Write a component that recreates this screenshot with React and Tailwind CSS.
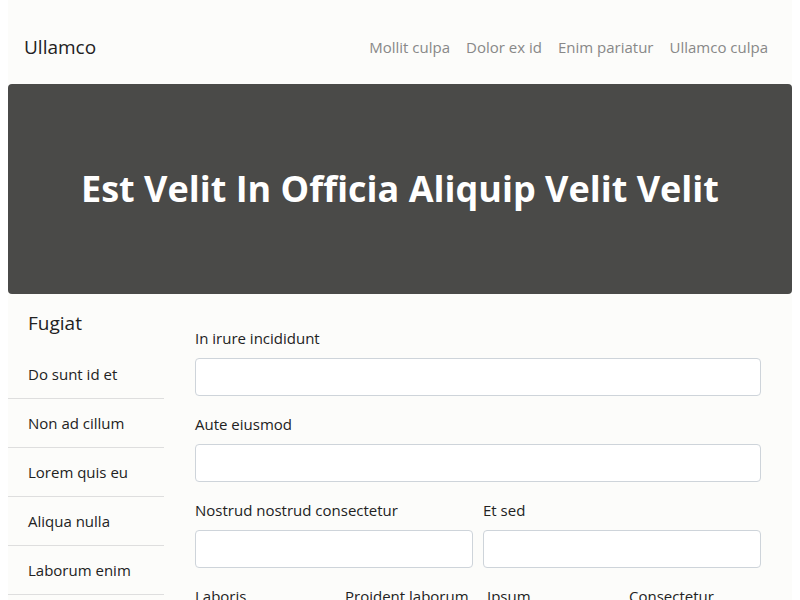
import React from 'react';

const links = ['Mollit culpa', 'Dolor ex id', 'Enim pariatur', 'Ullamco culpa'];
const sideItems = ['Do sunt id et', 'Non ad cillum', 'Lorem quis eu', 'Aliqua nulla', 'Laborum enim'];

function Field({ label, className = '' }) {
  return (
    <div className={className}>
      <label className="block text-[15px] text-[#222] leading-[20px] mb-[10px]">{label}</label>
      <input type="text" className="block w-full h-[38px] bg-white border border-[#ced4da] rounded-[4px]" />
    </div>
  );
}

export default function App() {
  return (
    <div className="min-h-screen bg-white px-2 font-['Open_Sans',sans-serif]">
      {/* Navbar */}
      <nav className="h-[84px] pt-[10px] bg-[#fcfcfa] flex items-center justify-between pl-4 pr-6">
        <span className="text-[19px] text-[#222]">Ullamco</span>
        <ul className="flex gap-4 text-[15px] text-[#888]">
          {links.map((l) => (
            <li key={l}>{l}</li>
          ))}
        </ul>
      </nav>

      {/* Hero */}
      <header className="h-[210px] bg-[#4a4a48] rounded-[4px] flex items-center justify-center">
        <h1 className="text-[36px] font-bold text-white">Est Velit In Officia Aliquip Velit Velit</h1>
      </header>

      {/* Body */}
      <div className="flex bg-[#fcfcfa]">
        <aside className="w-[156px] shrink-0">
          <h2 className="text-[19px] text-[#222] pl-5 pt-[16px] pb-[14px] leading-[26px]">Fugiat</h2>
          <ul>
            {sideItems.map((s) => (
              <li key={s} className="pl-5 h-[49px] flex items-center text-[15px] text-[#222] border-b border-[#dedede]">
                {s}
              </li>
            ))}
          </ul>
        </aside>
        <main className="flex-1 pl-[31px] pr-[31px] pt-[34px]">
          <Field label="In irure incididunt" className="mb-[18px]" />
          <Field label="Aute eiusmod" className="mb-[18px]" />
          <div className="flex gap-[10px] mb-[18px]">
            <Field label="Nostrud nostrud consectetur" className="flex-1" />
            <Field label="Et sed" className="flex-1" />
          </div>
          <div className="flex gap-[10px]">
            <Field label="Laboris" className="w-[140px]" />
            <Field label="Proident laborum" className="w-[132px]" />
            <Field label="Ipsum" className="w-[132px]" />
            <Field label="Consectetur" className="w-[132px]" />
          </div>
        </main>
      </div>
    </div>
  );
}
